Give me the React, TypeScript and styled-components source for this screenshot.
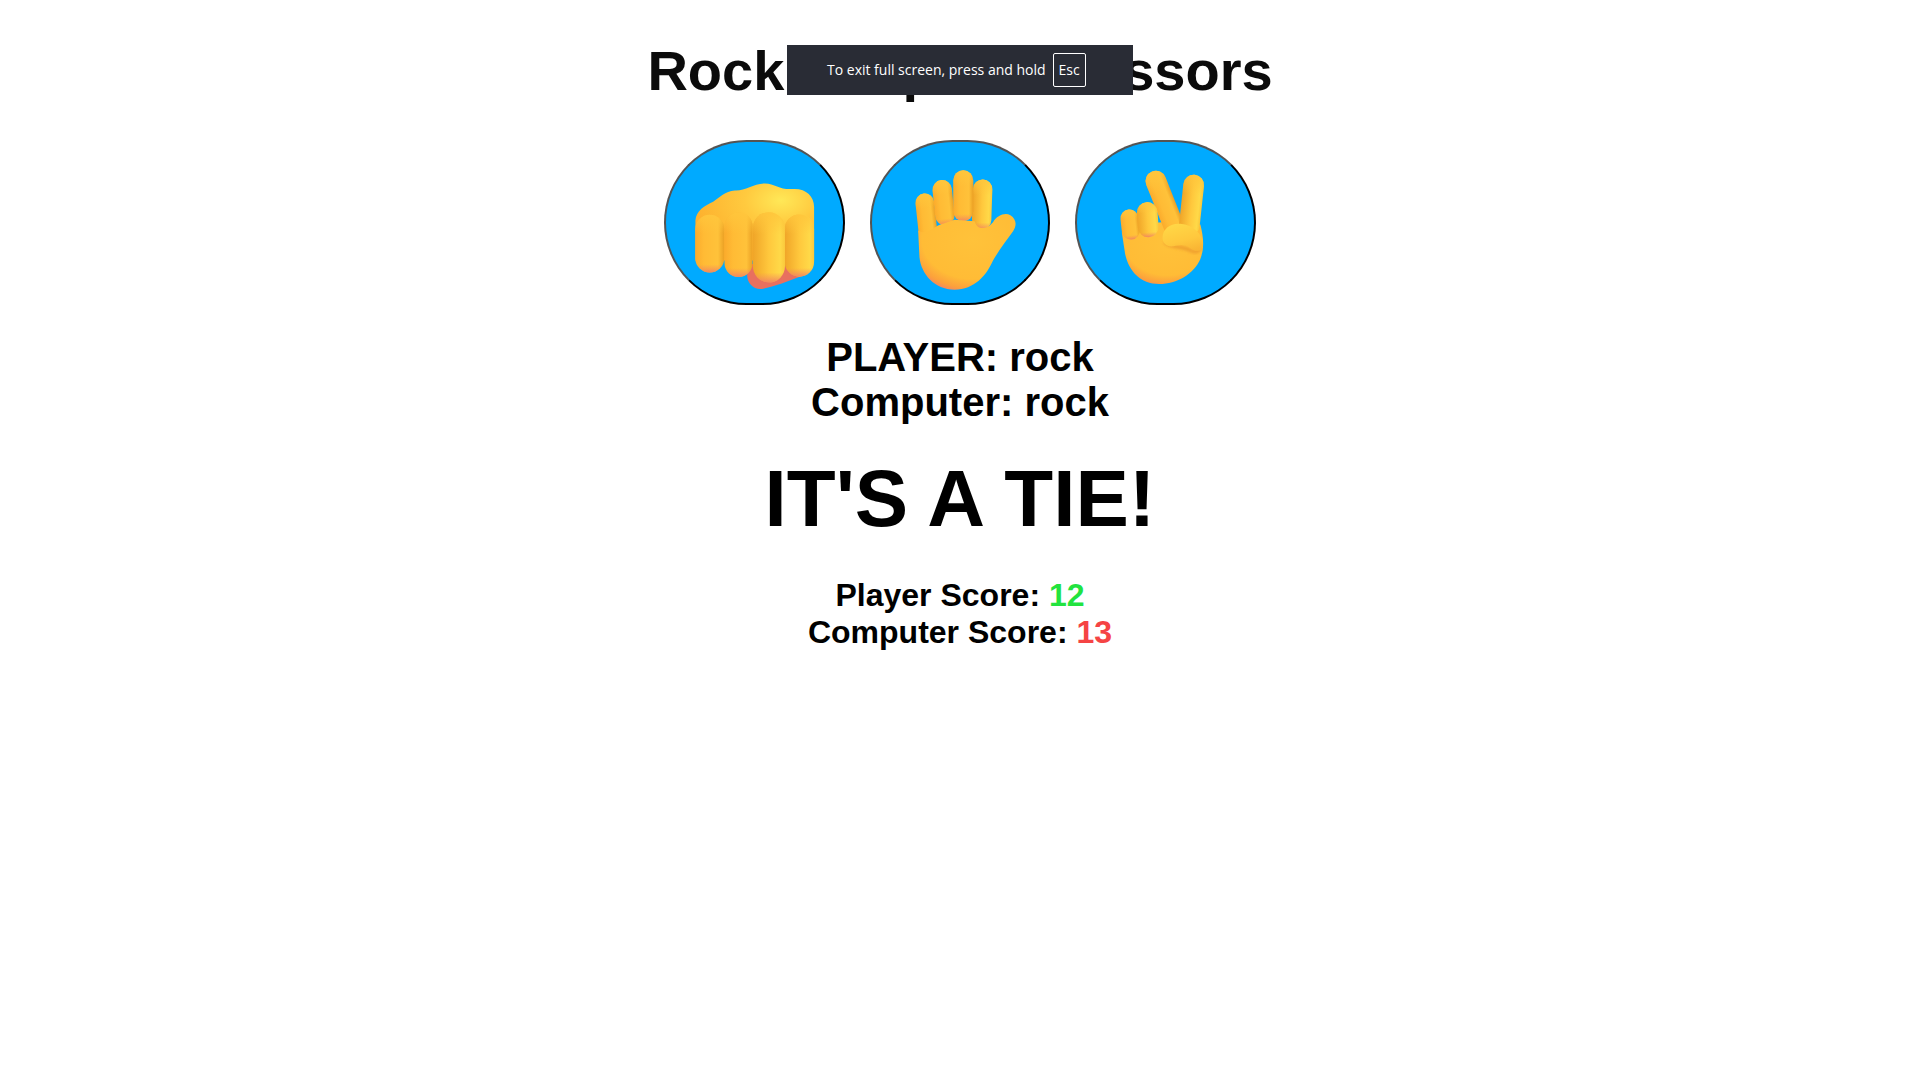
import React from 'react';
import styled, { createGlobalStyle } from 'styled-components';

const GlobalStyle = createGlobalStyle`
  html, body {
    margin: 0;
    background: #ffffff;
  }
  body {
    font-family: "Liberation Sans", Arial, sans-serif;
    color: #000000;
  }
`;

const Defs = ({ id }: { id: string }) => (
  <defs>
    <linearGradient id={`${id}-finger`} x1="0" y1="0" x2="1" y2="0">
      <stop offset="0" stopColor="#fbab2c" />
      <stop offset="0.3" stopColor="#ffbb35" />
      <stop offset="0.78" stopColor="#ffc23a" />
      <stop offset="1" stopColor="#eba024" />
    </linearGradient>
    <linearGradient id={`${id}-light`} x1="0" y1="0" x2="1" y2="0">
      <stop offset="0" stopColor="#f0a528" />
      <stop offset="0.5" stopColor="#ffc83d" />
      <stop offset="0.85" stopColor="#ffd948" />
      <stop offset="1" stopColor="#fac83c" />
    </linearGradient>
    <linearGradient id={`${id}-tip`} x1="0" y1="0" x2="0" y2="1">
      <stop offset="0" stopColor="#ffc63c" stopOpacity="0.9" />
      <stop offset="0.32" stopColor="#ffc63c" stopOpacity="0" />
      <stop offset="0.86" stopColor="#f58a5a" stopOpacity="0" />
      <stop offset="1" stopColor="#ef7d68" stopOpacity="0.85" />
    </linearGradient>
    <linearGradient id={`${id}-top`} x1="0" y1="0" x2="0" y2="1">
      <stop offset="0" stopColor="#ffc63c" stopOpacity="0.9" />
      <stop offset="0.32" stopColor="#ffc63c" stopOpacity="0" />
    </linearGradient>
    <linearGradient id={`${id}-thumb`} x1="0.3" y1="0" x2="0.7" y2="1">
      <stop offset="0" stopColor="#ffd746" />
      <stop offset="0.6" stopColor="#ffc83d" />
      <stop offset="1" stopColor="#f9b534" />
    </linearGradient>
    <radialGradient id={`${id}-palm`} cx="0.56" cy="0.34" r="0.72">
      <stop offset="0" stopColor="#ffc23a" />
      <stop offset="0.72" stopColor="#ffbc36" />
      <stop offset="0.9" stopColor="#fca03c" />
      <stop offset="1" stopColor="#f28268" />
    </radialGradient>
    <radialGradient id={`${id}-back`} cx="0.72" cy="0.22" r="0.75">
      <stop offset="0" stopColor="#ffe857" />
      <stop offset="0.4" stopColor="#ffca3f" />
      <stop offset="1" stopColor="#fdb02d" />
    </radialGradient>
    <filter id={`${id}-blur`} x="-30%" y="-30%" width="160%" height="160%">
      <feGaussianBlur stdDeviation="4" />
    </filter>
  </defs>
);

// one rounded finger running from fingertip (ax, ay) to base (bx, by)
const Finger = ({ id, ax, ay, bx, by, w, tone = 'finger', shade = 'tip' }: { id: string; ax: number; ay: number; bx: number; by: number; w: number; tone?: string; shade?: string }) => {
  const len = Math.hypot(bx - ax, by - ay);
  const angle = (Math.atan2(ax - bx, by - ay) * 180) / Math.PI;
  const box = { x: -w / 2, y: -w / 2, width: w, height: len + w, rx: w / 2 };
  return (
    <g transform={`translate(${ax} ${ay}) rotate(${angle})`}>
      <rect {...box} fill={`url(#${id}-${tone})`} />
      <rect {...box} fill={`url(#${id}-${shade})`} />
    </g>
  );
};

const FistIcon = () => (
  <EmojiSvg viewBox="34 36 528 480">
    <Defs id="fist" />
    <path
      d="M278 425 C272 450 290 478 322 475 C360 466 400 452 440 436 L420 400 L290 400 Z"
      fill="#e8705f"
    />
    <path
      d="M122 270 C124 240 150 226 175 214 C195 200 210 182 240 180 C270 182 295 160 330 159 C360 160 375 178 410 176 C450 172 477 195 477 230 L477 390 L122 390 Z"
      fill="url(#fist-back)"
    />
    <Finger id="fist" ax={165} ay={296} bx={165} by={382} w={87} />
    <Finger id="fist" ax={433} ay={296} bx={433} by={394} w={88} tone="light" />
    <Finger id="fist" ax={251} ay={288} bx={251} by={397} w={84} />
    <Finger id="fist" ax={342} ay={293} bx={342} by={407} w={96} tone="light" />
  </EmojiSvg>
);

const PalmIcon = () => (
  <EmojiSvg viewBox="38 36 528 480">
    <Defs id="palm" />
    <Finger id="palm" ax={196} ay={217} bx={205} by={300} w={56} />
    <Finger id="palm" ax={248} ay={178} bx={256} by={255} w={58} />
    <Finger id="palm" ax={369} ay={176} bx={366} by={268} w={58} tone="light" />
    <Finger id="palm" ax={311} ay={150} bx={311} by={242} w={60} />
    <path
      d="M176 300 C205 316 225 285 250 280 L285 268 L345 272 C352 298 380 300 400 275 C412 255 435 245 452 254 C470 265 472 285 460 302 C440 330 418 358 400 390 C380 435 345 477 285 477 C225 477 185 430 180 380 Z"
      fill="url(#palm-palm)"
    />
  </EmojiSvg>
);

const PeaceIcon = () => (
  <EmojiSvg viewBox="36 36 528 480">
    <Defs id="peace" />
    <path
      d="M170 305 C190 290 250 275 300 275 L405 282 C414 320 418 350 405 385 C385 430 335 460 282 460 C225 460 190 420 180 370 Z"
      fill="url(#peace-palm)"
    />
    <Finger id="peace" ax={272} ay={152} bx={325} by={285} w={62} shade="top" />
    <Finger id="peace" ax={385} ay={164} bx={372} by={285} w={62} tone="light" shade="top" />
    <Finger id="peace" ax={193} ay={264} bx={197} by={300} w={54} />
    <Finger id="peace" ax={246} ay={246} bx={249} by={289} w={62} tone="light" />
    <path
      d="M298 334 C315 354 345 345 372 358 C388 368 400 364 406 352"
      stroke="#e8932b"
      strokeWidth="9"
      fill="none"
      opacity="0.8"
      filter="url(#peace-blur)"
    />
    <path
      d="M292 322 C292 295 315 278 345 280 C385 284 412 310 413 345 C413 360 395 368 375 352 C355 338 340 345 325 347 C305 350 292 338 292 322 Z"
      fill="url(#peace-thumb)"
    />
  </EmojiSvg>
);

export default function App() {
  return (
    <>
      <GlobalStyle />
      <Page>
        <Title>Rock Paper Scissors</Title>
        <Choices>
          <Choice aria-label="rock"><FistIcon /></Choice>
          <Choice aria-label="paper"><PalmIcon /></Choice>
          <Choice aria-label="scissors"><PeaceIcon /></Choice>
        </Choices>
        <Picks>
          <div>PLAYER: rock</div>
          <div>Computer: rock</div>
        </Picks>
        <Result>IT'S A TIE!</Result>
        <Scores>
          <div>Player Score: <Score $color="#22e33f">12</Score></div>
          <div>Computer Score: <Score $color="#f54444">13</Score></div>
        </Scores>
        <FullscreenNotice>
          <NoticeText>To exit full screen, press and hold</NoticeText>
          <EscKey>Esc</EscKey>
        </FullscreenNotice>
      </Page>
    </>
  );
}

const Page = styled.div`
  position: relative;
  min-height: 1079px;
  padding: 39px 0 0 1px;
  box-sizing: border-box;
  text-align: center;
  font-weight: 700;
`;

const Title = styled.h1`
  margin: 0 0 37px;
  font-size: 56px;
  line-height: 64px;
  word-spacing: 34px;
  color: #0b0b0b;
`;

const Choices = styled.div`
  display: flex;
  justify-content: center;
  gap: 25px;
`;

const Choice = styled.button`
  width: 180.5px;
  height: 165px;
  padding: 0;
  box-sizing: border-box;
  border: 2px outset #000000;
  border-radius: 100px;
  background: #00aaff;
  cursor: pointer;
`;

const EmojiSvg = styled.svg`
  display: block;
  width: 176.5px;
  height: 161px;
`;

const Picks = styled.div`
  margin-top: 30px;
  font-size: 40px;
  line-height: 45px;
`;

const Result = styled.div`
  margin-top: 28px;
  font-size: 80px;
  line-height: 92px;
`;

const Scores = styled.div`
  margin-top: 32px;
  font-size: 32px;
  line-height: 37px;
`;

const Score = styled.span<{ $color: string }>`
  color: ${p => p.$color};
`;

const FullscreenNotice = styled.div`
  position: absolute;
  top: 45px;
  left: 787px;
  width: 346px;
  height: 50px;
  box-sizing: border-box;
  padding-left: 40px;
  display: flex;
  align-items: center;
  gap: 7px;
  background: #292c35;
  color: #ffffff;
  font-family: "Open Sans", "Noto Sans", sans-serif;
  font-size: 14px;
  font-weight: 400;
  white-space: nowrap;
`;

const NoticeText = styled.span`
  padding-bottom: 2px;
`;

const EscKey = styled.span`
  display: flex;
  align-items: center;
  justify-content: center;
  width: 33px;
  height: 34px;
  padding-bottom: 2px;
  box-sizing: border-box;
  border: 1px solid #ffffff;
  border-radius: 2px;
`;
